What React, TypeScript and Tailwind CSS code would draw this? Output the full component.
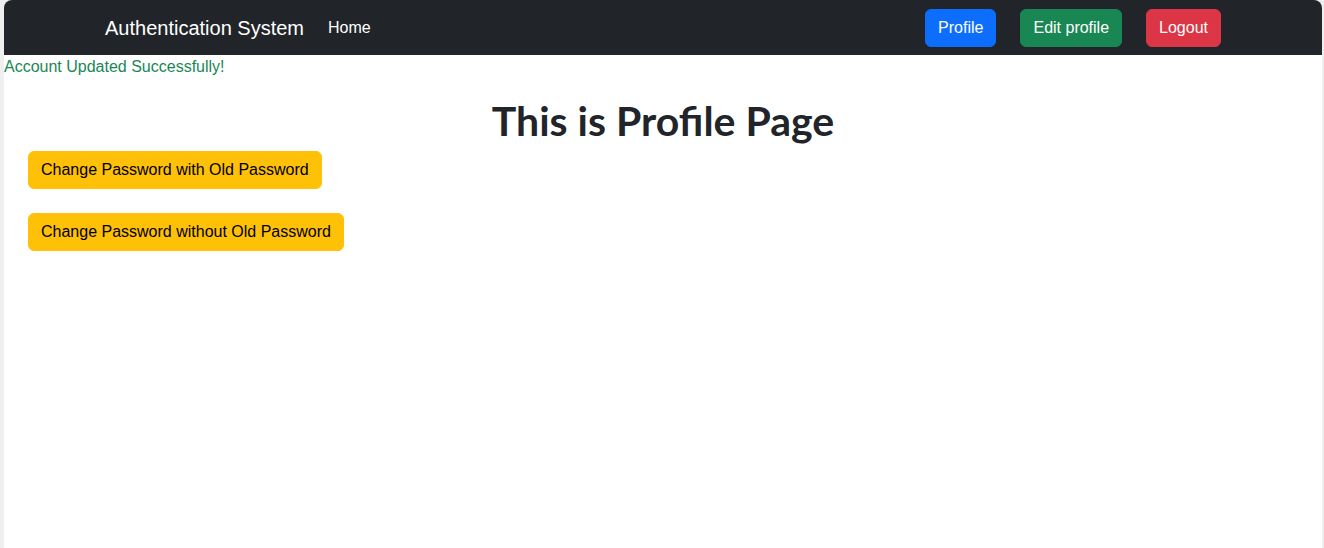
export default function App() {
  return (
    <div className="min-h-screen bg-[#efefef] pl-1 pr-0.5 font-['Liberation_Sans',Arial,sans-serif]">
      <div className="bg-white min-h-[548px] rounded-t-lg overflow-hidden">
        {/* Navbar */}
        <nav className="bg-[#212529] h-[55px]">
          <div className="max-w-[1140px] mx-auto px-3 h-full flex items-center">
            <span className="text-white text-[20px] leading-[30px] mr-4">Authentication System</span>
            <span className="text-white text-[16px] px-2">Home</span>
            <div className="ml-auto flex items-center gap-6">
              <button className="bg-[#0d6efd] text-white text-[16px] leading-6 px-3 py-1.5 border border-[#0d6efd] rounded-md">
                Profile
              </button>
              <button className="bg-[#198754] text-white text-[16px] leading-6 px-3 py-1.5 border border-[#198754] rounded-md">
                Edit profile
              </button>
              <button className="bg-[#dc3545] text-white text-[16px] leading-6 px-3 py-1.5 border border-[#dc3545] rounded-md">
                Logout
              </button>
            </div>
          </div>
        </nav>

        <div className="text-[#198754] text-[16px] leading-6">Account Updated Successfully!</div>

        <h1 className="text-center text-[41px] leading-[48px] font-bold text-[#212529] mt-[18px] font-['Lato',sans-serif]">
          This is Profile Page
        </h1>

        <div className="flex flex-col items-start gap-6 px-6 mt-1.5">
          <button className="bg-[#ffc107] text-black text-[16px] leading-6 px-3 py-1.5 border border-[#ffc107] rounded-md">
            Change Password with Old Password
          </button>
          <button className="bg-[#ffc107] text-black text-[16px] leading-6 px-3 py-1.5 border border-[#ffc107] rounded-md">
            Change Password without Old Password
          </button>
        </div>
      </div>
    </div>
  );
}
